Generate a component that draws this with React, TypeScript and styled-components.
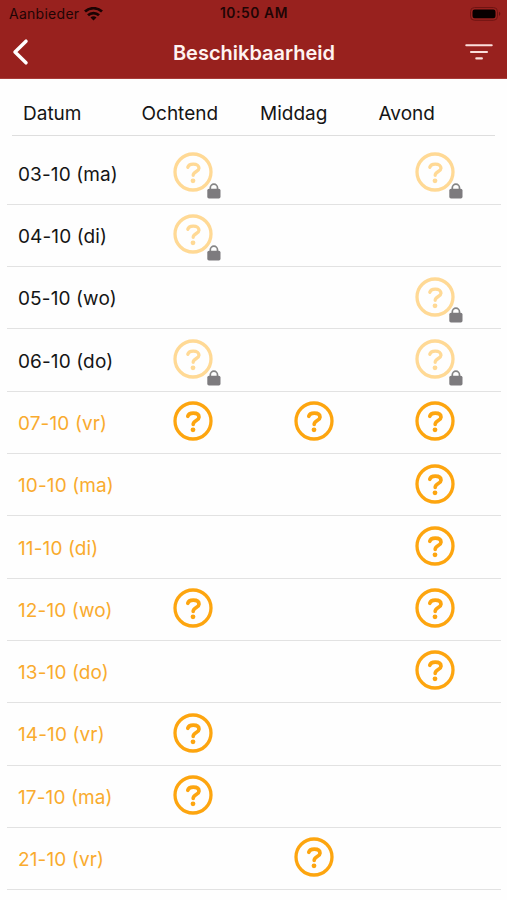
import React from "react";
import styled, { createGlobalStyle } from "styled-components";

const GlobalStyle = createGlobalStyle`
  * { box-sizing: border-box; }
  body { margin: 0; background: #fefefe; font-family: Inter, "Liberation Sans", sans-serif; }
`;

const Screen = styled.main`
  height: 900px;
  overflow: hidden;
  background: #fefefe;
`;

const TopBar = styled.header`
  height: 79px;
  background: #98211e;
  border-bottom: 1px solid #a83c39;
`;

const StatusBar = styled.div`
  display: grid;
  grid-template-columns: 1fr auto 1fr;
  align-items: center;
  height: 27px;
  padding: 0 6px 0 9px;
  color: #1f0505;
  font-size: 14px;
  line-height: 27px;
`;

const Carrier = styled.div`
  display: flex;
  align-items: center;
  gap: 5px;
  letter-spacing: 0.27px;
`;

const Clock = styled.time`
  margin-right: 2px;
  font-size: 13.8px;
  font-weight: 600;
  letter-spacing: 0.6px;
`;

const BatterySlot = styled.div`
  display: flex;
  justify-content: flex-end;
`;

const NavBar = styled.nav`
  display: grid;
  grid-template-columns: 1fr auto 1fr;
  align-items: center;
  height: 51px;
  padding: 0 14px 0 12px;
`;

const NavButton = styled.button<{ $end?: boolean }>`
  display: flex;
  justify-self: ${(p) => (p.$end ? "end" : "start")};
  margin-top: -2px;
  padding: 0;
  border: 0;
  background: none;
`;

const Title = styled.h1`
  margin: 0;
  padding-left: 3px;
  color: #fff3f1;
  font-size: 20px;
  font-weight: 600;
  line-height: 50px;
  letter-spacing: 0;
`;

const ColumnHeads = styled.div`
  display: grid;
  grid-template-columns: 118.5px 118.5px 118.5px 1fr;
  height: 57.2px;
  margin: 0 12px;
  padding: 6px 0 0 11px;
  border-bottom: 1px solid #dedede;
  color: #151515;
  font-size: 19px;
  line-height: 57px;
`;

const Rows = styled.div`
  margin: 6.4px 6px 0 7px;
`;

const Row = styled.div<{ $open: boolean }>`
  display: grid;
  grid-template-columns: 114.5px 121px 121px 121px;
  height: 62.3px;
  padding-left: 11px;
  border-bottom: 1.4px solid #e2e2e2;
  color: ${(p) => (p.$open ? "#f9ab2e" : "#151515")};
`;

const DateLabel = styled.span`
  padding-top: 3.2px;
  font-size: 19px;
  line-height: 58px;
  letter-spacing: 0.12px;
  white-space: nowrap;
`;

const Slot = styled.div`
  position: relative;
  display: flex;
  justify-content: center;
  padding-top: 9.5px;
`;

const LockBadge = styled.svg`
  position: absolute;
  left: 74.5px;
  top: 40.2px;
`;

const Mark = styled.svg<{ $faded: boolean }>`
  color: ${(p) => (p.$faded ? "#ffd995" : "#fda50f")};
`;

function Question({ faded }: { faded: boolean }) {
  return (
    <Mark $faded={faded} width="40" height="40" viewBox="-20 -20 40 40" fill="none" stroke="currentColor">
      <circle r="18" strokeWidth="3.3" />
      <path
        d="M-5.2-4.7C-4.6-6.9-2.7-7.8.2-7.8C3.9-7.8 6-6.3 6-3.7C6-.6.2-.3.2 3.3"
        strokeWidth={faded ? 3.3 : 3.7}
        strokeLinecap="round"
      />
      <circle cy="8.8" r="2.4" fill="currentColor" stroke="none" />
    </Mark>
  );
}

function Lock() {
  return (
    <LockBadge width="14" height="16" viewBox="0 0 14 16">
      <path d="M3.3 8V4.8a3.6 3.6 0 0 1 7.2 0V8" fill="none" stroke="#858585" strokeWidth="1.7" />
      <rect x=".3" y="5.8" width="13.2" height="9.6" rx="1.7" fill="#7d7b7e" />
    </LockBadge>
  );
}

type Day = { date: string; slots: [number, number, number]; locked?: boolean };

const days: Day[] = [
  { date: "03-10 (ma)", slots: [1, 0, 1], locked: true },
  { date: "04-10 (di)", slots: [1, 0, 0], locked: true },
  { date: "05-10 (wo)", slots: [0, 0, 1], locked: true },
  { date: "06-10 (do)", slots: [1, 0, 1], locked: true },
  { date: "07-10 (vr)", slots: [1, 1, 1] },
  { date: "10-10 (ma)", slots: [0, 0, 1] },
  { date: "11-10 (di)", slots: [0, 0, 1] },
  { date: "12-10 (wo)", slots: [1, 0, 1] },
  { date: "13-10 (do)", slots: [0, 0, 1] },
  { date: "14-10 (vr)", slots: [1, 0, 0] },
  { date: "17-10 (ma)", slots: [1, 0, 0] },
  { date: "21-10 (vr)", slots: [0, 1, 0] },
];

export default function App() {
  return (
    <Screen>
      <GlobalStyle />
      <TopBar>
        <StatusBar>
          <Carrier>
            Aanbieder
            <svg width="19" height="14" viewBox="0 0 19 14" fill="none" stroke="#1b0303" strokeWidth="2.7">
              <path d="M1 4.6C5.7.1 13.3.1 18 4.6" />
              <path d="M4 8.2c3-2.9 8-2.9 11 0" />
              <path d="M6.5 10.4c1.7-1.5 4.3-1.5 6 0L9.5 13.5Z" fill="#1b0303" stroke="none" />
            </svg>
          </Carrier>
          <Clock>10:50 AM</Clock>
          <BatterySlot>
            <svg width="31" height="14" viewBox="0 0 31 14">
              <rect x=".5" y=".5" width="27" height="12.8" rx="4" fill="none" stroke="#701412" />
              <rect x="2.5" y="2.5" width="23" height="8.8" rx="2.2" fill="#080000" />
              <path d="M29 4.8c1.8.6 1.8 3.5 0 4.2Z" fill="#651210" />
            </svg>
          </BatterySlot>
        </StatusBar>
        <NavBar>
          <NavButton aria-label="Terug">
            <svg width="18" height="28" viewBox="0 0 18 28" fill="none" stroke="#fff" strokeWidth="3.5" strokeLinecap="round" strokeLinejoin="round">
              <path d="M14 3.2 3 14l11 10.8" />
            </svg>
          </NavButton>
          <Title>Beschikbaarheid</Title>
          <NavButton $end aria-label="Filter">
            <svg width="28" height="18" viewBox="0 0 28 18" fill="none" stroke="#fbdedb" strokeWidth="2.1" strokeLinecap="round">
              <path d="M1.3 2.3h25.4M6 9h16M11.3 15.4h5.6" />
            </svg>
          </NavButton>
        </NavBar>
      </TopBar>
      <ColumnHeads>
        <span>Datum</span>
        <span>Ochtend</span>
        <span>Middag</span>
        <span>Avond</span>
      </ColumnHeads>
      <Rows>
        {days.map((day) => (
          <Row key={day.date} $open={!day.locked}>
            <DateLabel>{day.date}</DateLabel>
            {day.slots.map((asked, i) => (
              <Slot key={i}>
                {asked ? <Question faded={!!day.locked} /> : null}
                {asked && day.locked ? <Lock /> : null}
              </Slot>
            ))}
          </Row>
        ))}
      </Rows>
    </Screen>
  );
}
